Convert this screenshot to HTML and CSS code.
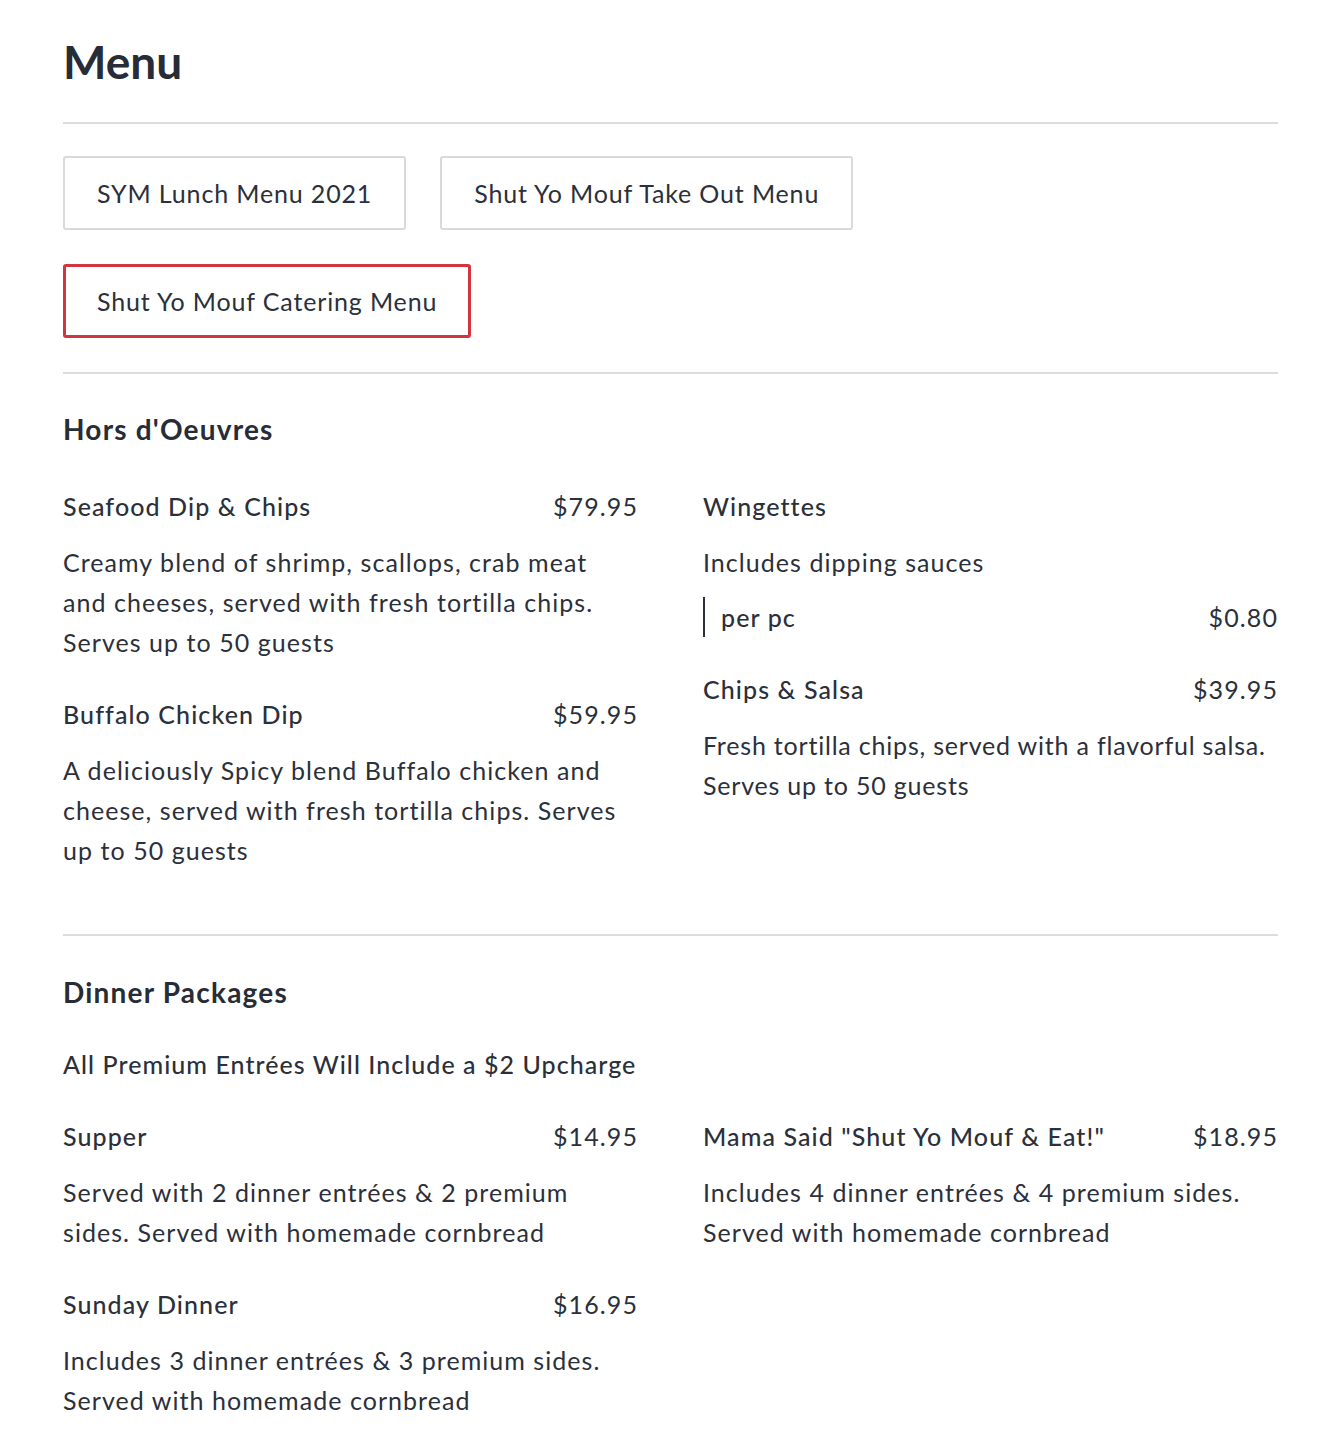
FILE: index.html
```html
<!DOCTYPE html>
<html lang="en">
<head>
<meta charset="utf-8">
<title>Menu</title>
<link rel="stylesheet" href="styles.css">
</head>
<body>
<div class="page">
  <h1 class="title">Menu</h1>
  <div class="tabs">
    <button class="tab">SYM Lunch Menu 2021</button>
    <button class="tab">Shut Yo Mouf Take Out Menu</button>
    <button class="tab active">Shut Yo Mouf Catering Menu</button>
  </div>

  <section class="section first">
    <h2 class="section-title">Hors d'Oeuvres</h2>
    <div class="grid">
      <div class="col">
        <div class="item">
          <div class="item-head"><span class="name">Seafood Dip &amp; Chips</span><span class="price">$79.95</span></div>
          <p class="desc">Creamy blend of shrimp, scallops, crab meat and cheeses, served with fresh tortilla chips. Serves up to 50 guests</p>
        </div>
        <div class="item">
          <div class="item-head"><span class="name">Buffalo Chicken Dip</span><span class="price">$59.95</span></div>
          <p class="desc">A deliciously Spicy blend Buffalo chicken and cheese, served with fresh tortilla chips. Serves up to 50 guests</p>
        </div>
      </div>
      <div class="col">
        <div class="item">
          <div class="item-head"><span class="name">Wingettes</span></div>
          <p class="desc">Includes dipping sauces</p>
          <div class="variant"><span class="vname">per pc</span><span class="price">$0.80</span></div>
        </div>
        <div class="item">
          <div class="item-head"><span class="name">Chips &amp; Salsa</span><span class="price">$39.95</span></div>
          <p class="desc snug">Fresh tortilla chips, served with a flavorful salsa. Serves up to 50 guests</p>
        </div>
      </div>
    </div>
  </section>

  <section class="section">
    <h2 class="section-title tight">Dinner Packages</h2>
    <p class="note">All Premium Entrées Will Include a $2 Upcharge</p>
    <div class="grid">
      <div class="col">
        <div class="item">
          <div class="item-head"><span class="name">Supper</span><span class="price">$14.95</span></div>
          <p class="desc">Served with 2 dinner entrées &amp; 2 premium sides. Served with homemade cornbread</p>
        </div>
        <div class="item">
          <div class="item-head"><span class="name">Sunday Dinner</span><span class="price">$16.95</span></div>
          <p class="desc">Includes 3 dinner entrées &amp; 3 premium sides. Served with homemade cornbread</p>
        </div>
      </div>
      <div class="col">
        <div class="item">
          <div class="item-head"><span class="name">Mama Said "Shut Yo Mouf &amp; Eat!"</span><span class="price">$18.95</span></div>
          <p class="desc">Includes 4 dinner entrées &amp; 4 premium sides. Served with homemade cornbread</p>
        </div>
      </div>
    </div>
  </section>
</div>
</body>
</html>
```

FILE: styles.css
```css
* { box-sizing: border-box; }

body {
  margin: 0;
  background: #ffffff;
  color: #2b303a;
  font-family: Lato, "Open Sans", "Liberation Sans", sans-serif;
}

.page {
  width: 1215px;
  margin-left: 63px;
  padding-top: 30px;
}

.title {
  margin: 0;
  font-size: 46px;
  line-height: 64px;
  font-weight: 700;
  color: #272c36;
}

.tabs {
  margin-top: 28px;
  border-top: 2px solid #dcdcdc;
  padding: 32px 0 34px;
  display: flex;
  flex-wrap: wrap;
  gap: 34px;
}

.tab {
  height: 74px;
  padding: 0 32px;
  background: #fff;
  border: 2px solid #d9d9d9;
  border-radius: 3px;
  font-family: inherit;
  font-size: 25px;
  letter-spacing: 0.85px;
  color: #2b303a;
  cursor: pointer;
}

.tab.active {
  border: 3px solid #d2353f;
  padding: 0 31px;
}

.section {
  border-top: 2px solid #dcdcdc;
  padding: 37px 0 64px;
}

.section-title {
  margin: 0 0 42px;
  font-size: 28px;
  line-height: 37px;
  letter-spacing: 1.2px;
  font-weight: 700;
  color: #272c36;
}

.section-title.tight {
  margin: 1px 0 37px;
}

.note {
  margin: 0 0 40px;
  font-size: 25px;
  line-height: 32px;
  letter-spacing: 1.05px;
  font-weight: 500;
}

.grid {
  display: grid;
  grid-template-columns: 575px 575px;
  column-gap: 65px;
}

.col {
  display: flex;
  flex-direction: column;
  gap: 36px;
}

.item-head {
  display: flex;
  justify-content: space-between;
  align-items: baseline;
  font-size: 25px;
  line-height: 32px;
  letter-spacing: 1.1px;
}

.name {
  font-weight: 500;
}

.price {
  font-weight: 400;
}

.desc {
  margin: 20px 0 0;
  font-size: 25px;
  line-height: 40px;
  letter-spacing: 1.05px;
  font-weight: 400;
}

.desc.snug {
  letter-spacing: 0.8px;
}

.variant {
  margin-top: 15px;
  display: flex;
  justify-content: space-between;
  align-items: center;
  border-left: 2px solid #2b303a;
  padding-left: 16px;
  font-size: 25px;
  line-height: 40px;
  letter-spacing: 1.1px;
}

.vname {
  font-weight: 500;
}
```
